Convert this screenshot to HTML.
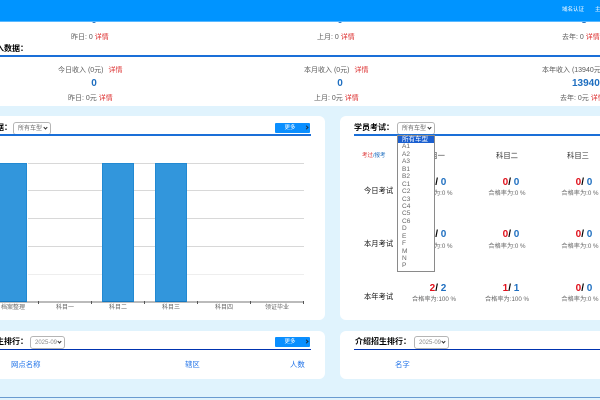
<!DOCTYPE html>
<html lang="zh"><head><meta charset="utf-8"><style>
*{box-sizing:border-box;margin:0;padding:0}
html,body{width:600px;height:400px;overflow:hidden;background:#e0f3fd;font-family:"Liberation Sans","Noto Sans CJK SC",sans-serif}
#w{position:absolute;left:0;top:0;width:600px;height:400px;overflow:hidden;background:#e0f3fd}
#w div{position:absolute}
.t{position:absolute;white-space:nowrap;line-height:1;color:#5c5c5c}
.c{transform:translateX(-50%)}
.s{font-size:7px}
.r{color:#d33}
.n{font-size:10px;font-weight:bold;color:#1f6fc0}
.h{font-size:8px;font-weight:bold;color:#000}
.card{background:#fff}
.sel{background:#fff;border:1px solid #b5b5b5;border-radius:3px;font-size:6px;color:#666;padding:3px 0 0 4px;height:13px;white-space:nowrap;line-height:7px}
.sel i{position:absolute;right:3px;top:3px;width:3px;height:3px;border-right:1px solid #333;border-bottom:1px solid #333;transform:rotate(45deg)}
.btn{background:#0a8fff;color:#fff;font-size:5.5px;text-align:center;line-height:11px;border-radius:1px;width:35px;height:10px;padding-right:5px}
.btn i{position:absolute;right:2px;top:3px;width:3px;height:3px;border-right:1px solid #234;border-top:1px solid #234;transform:rotate(45deg)}
.g{left:28px;width:276px;height:1px;background:#d8d8d8}
.bar{top:163px;height:139px;background:#3296dc;border:1px solid #2289d2;border-bottom-color:#1578c0}
.tick{top:301px;width:1px;height:3px;background:#555}
.x{font-size:6px;top:305px;color:#666}
.k{font-size:7.3px;color:#333}
.f{font-size:7.3px;color:#111}
.m{font-size:10px;font-weight:bold;color:#000}
.m b{color:#e0101b}.m u{color:#1f6fc0;text-decoration:none}
.p{font-size:6.2px;color:#666}
.o{font-size:7.4px;color:#1f72e8}
.it{left:0;width:36px;height:7.44px;font-size:6.5px;line-height:7.44px;padding-left:4px;color:#666;white-space:nowrap}
</style></head><body><div id="w">
<div style="left:0;top:22px;width:600px;height:84px;background:#fff"></div>
<span class="t n c" style="left:94px;top:16px">0</span>
<span class="t n c" style="left:340px;top:16px">0</span>
<span class="t n c" style="left:584px;top:16px">3</span>
<div style="left:0;top:0;width:600px;height:21px;background:#0094ff"></div>
<div style="left:0;top:21px;width:600px;height:1px;background:#5ab8ff"></div>
<span class="t" style="left:562px;top:8px;font-size:5.5px;color:#fff">域名认证</span>
<span class="t" style="left:595px;top:8px;font-size:5.5px;color:#fff">主页</span>

<span class="t s" style="left:71px;top:34px">昨日: 0 <span class="r">详情</span></span>
<span class="t s" style="left:317px;top:34px">上月: 0 <span class="r">详情</span></span>
<span class="t s" style="left:562px;top:34px">去年: 0 <span class="r">详情</span></span>
<span class="t h" style="left:-12px;top:45px">收入数据：</span>
<div style="left:0;top:55px;width:600px;height:2px;background:#1a6fd8"></div>

<span class="t s" style="left:58px;top:67px">今日收入 (0元)<span class="r" style="margin-left:5px">详情</span></span>
<span class="t s" style="left:304px;top:67px">本月收入 (0元)<span class="r" style="margin-left:5px">详情</span></span>
<span class="t s" style="left:542px;top:67px">本年收入 (13940元)</span>
<span class="t n c" style="left:94px;top:79px">0</span>
<span class="t n c" style="left:340px;top:79px">0</span>
<span class="t n" style="left:572px;top:79px">13940</span>
<span class="t s" style="left:68px;top:95px">昨日: 0元 <span class="r">详情</span></span>
<span class="t s" style="left:314px;top:95px">上月: 0元 <span class="r">详情</span></span>
<span class="t s" style="left:560px;top:95px">去年: 0元 <span class="r">详情</span></span>

<div class="card" style="left:0;top:116px;width:325px;height:204px;border-radius:0 6px 6px 0"></div>
<span class="t h" style="left:-28px;top:124px">学员数据：</span>
<div class="sel" style="left:13px;top:122px;width:38px">所有车型<i></i></div>
<div class="btn" style="left:275px;top:123px">更多<i></i></div>
<div style="left:0;top:134px;width:311px;height:2px;background:#1a6fd8"></div>
<div class="g" style="top:163px"></div><div class="g" style="top:190px"></div><div class="g" style="top:218px"></div><div class="g" style="top:246px"></div><div class="g" style="top:274px;background:#eee"></div>
<div style="left:0;top:301px;width:304px;height:2px;background:#bbb"></div>
<div class="tick" style="left:38px"></div><div class="tick" style="left:91px"></div><div class="tick" style="left:144px"></div><div class="tick" style="left:197px"></div><div class="tick" style="left:250px"></div><div class="tick" style="left:303px"></div>
<div class="bar" style="left:0;width:27px;border-left:0"></div><div class="bar" style="left:102px;width:32px"></div><div class="bar" style="left:155px;width:32px"></div>
<span class="t x" style="left:1px;top:305px">档案整理</span><span class="t x c" style="left:65px;top:305px">科目一</span><span class="t x c" style="left:118px;top:305px">科目二</span><span class="t x c" style="left:171px;top:305px">科目三</span><span class="t x c" style="left:224px;top:305px">科目四</span><span class="t x c" style="left:277px;top:305px">领证毕业</span>

<div class="card" style="left:340px;top:116px;width:260px;height:204px;border-radius:6px 0 0 6px"></div>
<span class="t h" style="left:354px;top:124px">学员考试：</span>
<div class="sel" style="left:397px;top:122px;width:38px">所有车型<i></i></div>
<div style="left:354px;top:134px;width:246px;height:2px;background:#1a6fd8"></div>
<span class="t" style="left:362px;top:154px;font-size:5.5px;color:#d33">考过<span style="color:#1f6fc0">/报考</span></span>
<span class="t k c" style="left:434px;top:152px">科目一</span><span class="t k c" style="left:507px;top:152px">科目二</span><span class="t k c" style="left:578px;top:152px">科目三</span>
<span class="t f" style="left:364px;top:187px">今日考试</span><span class="t f" style="left:364px;top:240px">本月考试</span><span class="t f" style="left:364px;top:293px">本年考试</span>
<span class="t m c" style="left:438px;top:178px"><b>0</b>/ <u>0</u></span><span class="t m c" style="left:511px;top:178px"><b>0</b>/ <u>0</u></span><span class="t m c" style="left:584px;top:178px"><b>0</b>/ <u>0</u></span>
<span class="t p c" style="left:434px;top:191px">合格率为:0 %</span><span class="t p c" style="left:507px;top:191px">合格率为:0 %</span><span class="t p c" style="left:580px;top:191px">合格率为:0 %</span>
<span class="t m c" style="left:438px;top:230px"><b>0</b>/ <u>0</u></span><span class="t m c" style="left:511px;top:230px"><b>0</b>/ <u>0</u></span><span class="t m c" style="left:584px;top:230px"><b>0</b>/ <u>0</u></span>
<span class="t p c" style="left:434px;top:244px">合格率为:0 %</span><span class="t p c" style="left:507px;top:244px">合格率为:0 %</span><span class="t p c" style="left:580px;top:244px">合格率为:0 %</span>
<span class="t m c" style="left:438px;top:284px"><b>2</b>/ <u>2</u></span><span class="t m c" style="left:511px;top:284px"><b>1</b>/ <u>1</u></span><span class="t m c" style="left:584px;top:284px"><b>0</b>/ <u>0</u></span>
<span class="t p c" style="left:434px;top:297px">合格率为:100 %</span><span class="t p c" style="left:507px;top:297px">合格率为:100 %</span><span class="t p c" style="left:580px;top:297px">合格率为:0 %</span>

<div style="left:397px;top:135px;width:38px;height:137px;background:#fff;border:1px solid #8a8a8a">
<div class="it" style="top:0;background:#1a5fd0;color:#fff">所有车型</div>
<div class="it" style="top:7.44px">A1</div><div class="it" style="top:14.88px">A2</div><div class="it" style="top:22.32px">A3</div><div class="it" style="top:29.76px">B1</div><div class="it" style="top:37.2px">B2</div><div class="it" style="top:44.64px">C1</div><div class="it" style="top:52.08px">C2</div><div class="it" style="top:59.52px">C3</div><div class="it" style="top:66.96px">C4</div><div class="it" style="top:74.4px">C5</div><div class="it" style="top:81.84px">C6</div><div class="it" style="top:89.28px">D</div><div class="it" style="top:96.72px">E</div><div class="it" style="top:104.16px">F</div><div class="it" style="top:111.6px">M</div><div class="it" style="top:119.04px">N</div><div class="it" style="top:126.48px">P</div>
</div>

<div class="card" style="left:0;top:331px;width:325px;height:48px;border-radius:0 6px 6px 0"></div>
<span class="t h" style="left:-28px;top:338px">网点招生排行：</span>
<div class="sel" style="left:30px;top:336px;width:35px;color:#888">2025-09<i></i></div>
<div class="btn" style="left:275px;top:337px">更多<i></i></div>
<div style="left:0;top:349px;width:311px;height:1px;background:#0033b0"></div>
<span class="t o" style="left:11px;top:361px">网点名称</span><span class="t o" style="left:185px;top:361px">辖区</span><span class="t o" style="left:290px;top:361px">人数</span>

<div class="card" style="left:340px;top:331px;width:260px;height:48px;border-radius:6px 0 0 6px"></div>
<span class="t h" style="left:355px;top:338px">介绍招生排行：</span>
<div class="sel" style="left:414px;top:336px;width:35px;color:#888">2025-09<i></i></div>
<div style="left:354px;top:349px;width:246px;height:1px;background:#0033b0"></div>
<span class="t o" style="left:395px;top:361px">名字</span>
<div style="left:0;top:397px;width:600px;height:1px;background:#6a9bd0"></div>
</div></body></html>
